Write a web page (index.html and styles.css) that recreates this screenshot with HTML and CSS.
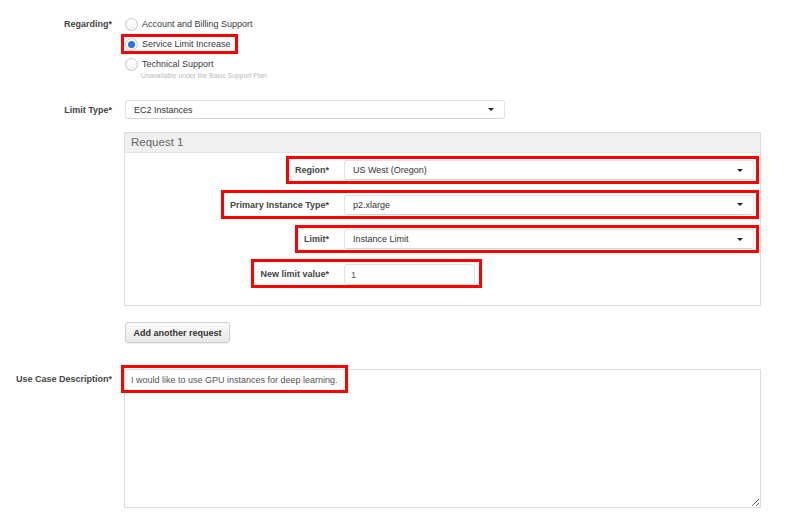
FILE: index.html
```html
<!DOCTYPE html>
<html lang="en">
<head>
  <meta charset="UTF-8" />
  <title>Create Case - Service Limit Increase</title>
  <link rel="stylesheet" href="styles.css">
</head>
<body>
  <form class="case-form">

    <div class="form-row">
      <div class="form-label top">Regarding*</div>
      <div class="radio-group">
        <div class="radio-option">
          <span class="radio"></span>
          <span>Account and Billing Support</span>
        </div>
        <div class="radio-option marked">
          <span class="radio checked"></span>
          <span>Service Limit Increase</span>
        </div>
        <div class="radio-option">
          <span class="radio"></span>
          <span>Technical Support</span>
        </div>
        <div class="radio-note">Unavailable under the Basic Support Plan</div>
      </div>
    </div>

    <div class="form-row limit-type">
      <div class="form-label">Limit Type*</div>
      <div class="select wide-380">
        <span>EC2 Instances</span>
        <span class="caret"></span>
      </div>
    </div>

    <div class="form-row panel-row">
      <div></div>
      <div class="panel">
        <div class="panel-heading">Request 1</div>
        <div class="panel-body">
          <div class="request-row">
            <div class="request-label">Region*</div>
            <div class="request-field">
              <div class="select">
                <span>US West (Oregon)</span>
                <span class="caret"></span>
              </div>
            </div>
          </div>
          <div class="request-row tall">
            <div class="request-label">Primary Instance Type*</div>
            <div class="request-field">
              <div class="select">
                <span>p2.xlarge</span>
                <span class="caret"></span>
              </div>
            </div>
          </div>
          <div class="request-row">
            <div class="request-label">Limit*</div>
            <div class="request-field">
              <div class="select">
                <span>Instance Limit</span>
                <span class="caret"></span>
              </div>
            </div>
          </div>
          <div class="request-row tall">
            <div class="request-label">New limit value*</div>
            <div class="request-field short">
              <input class="text-input" type="text" value="1">
            </div>
          </div>
        </div>
      </div>
    </div>

    <div class="form-row button-row">
      <div></div>
      <div>
        <button type="button" class="btn">Add another request</button>
      </div>
    </div>

    <div class="form-row description-row">
      <div class="form-label top desc">Use Case Description*</div>
      <div class="textarea-wrap">
        <textarea class="textarea">I would like to use GPU instances for deep learning.</textarea>
        <span class="mark-box"></span>
      </div>
    </div>

  </form>
</body>
</html>
```

FILE: styles.css
```css
:root {
  --label: #444;
  --text: #333;
  --line: #ddd;
  --mark: #ff0000;
}

body {
  margin: 0;
  background: #fff;
  font-family: "Liberation Sans", Arial, Helvetica, sans-serif;
  font-size: 9px;
  color: var(--text);
}

.case-form {
  padding-top: 14px;
  display: flex;
  flex-direction: column;
}

.form-row {
  display: grid;
  grid-template-columns: 112px 637px;
  column-gap: 12px;
  align-items: center;
}

.form-label {
  text-align: right;
  font-weight: bold;
  color: var(--label);
  line-height: 10px;
}

.form-label.top {
  align-self: start;
  padding-top: 5px;
}

/* radios */
.radio-group {
  display: flex;
  flex-direction: column;
  margin-left: -3px;
  align-items: flex-start;
}

.radio-option {
  display: flex;
  align-items: center;
  gap: 4px;
  height: 14px;
  padding: 0 4px 0 1px;
  border: 3px solid transparent;
  line-height: 14px;
  color: #3a3a3a;
}

.radio-option.marked {
  border-color: var(--mark);
}

.radio {
  width: 11px;
  height: 11px;
  border-radius: 50%;
  border: 1px solid #c8c8c8;
  background: linear-gradient(to bottom, #fff, #f1f1f1);
  box-sizing: content-box;
  display: flex;
  align-items: center;
  justify-content: center;
}

.radio.checked::after {
  content: '';
  width: 7px;
  height: 7px;
  border-radius: 50%;
  background: #2f73d8;
}

.radio-note {
  margin: -3px 0 0 20px;
  font-size: 6.8px;
  line-height: 9px;
  color: #bbb;
}

/* selects */
.limit-type {
  margin-top: 20px;
}

.select {
  height: 19px;
  border: 1px solid #e2e2e2;
  border-bottom-color: #d6d6d6;
  border-radius: 3px;
  background: #fff;
  box-sizing: border-box;
  display: flex;
  align-items: center;
  justify-content: space-between;
  padding: 0 10px 0 8px;
  color: var(--text);
}

.wide-380 {
  width: 380px;
  margin-left: 1px;
}

.caret {
  width: 0;
  height: 0;
  border-left: 3px solid transparent;
  border-right: 3px solid transparent;
  border-top: 3px solid #222;
}

/* request panel */
.panel-row {
  margin-top: 13px;
}

.panel {
  border: 1px solid var(--line);
}

.panel-heading {
  height: 19px;
  line-height: 19px;
  background: #efefef;
  border-bottom: 1px solid #e4e4e4;
  padding-left: 6px;
  font-size: 11.5px;
  color: #666;
}

.panel-body {
  padding: 3px 1px 17px 0;
  display: flex;
  flex-direction: column;
  gap: 6px;
}

.request-row {
  display: grid;
  grid-template-columns: 219px 1fr;
  height: 28px;
}

.request-row.tall {
  height: 29px;
}

.request-label {
  justify-self: end;
  display: flex;
  align-items: center;
  padding: 0 15px 0 6px;
  border: 3px solid var(--mark);
  border-right: none;
  font-weight: bold;
  color: var(--label);
}

.request-field {
  display: flex;
  align-items: center;
  padding-right: 2px;
  border: 3px solid var(--mark);
  border-left: none;
}

.request-field .select {
  flex: 1;
  height: 20px;
}

.request-field.short {
  justify-self: start;
  padding-right: 4px;
  align-items: flex-end;
}

.text-input {
  width: 131px;
  height: 21px;
  box-sizing: border-box;
  border: 1px solid #e2e2e2;
  border-radius: 3px;
  padding: 0 6px;
  font-family: inherit;
  font-size: 9px;
  color: #555;
  outline: none;
}

/* button */
.button-row {
  margin-top: 16px;
}

.btn {
  height: 21px;
  width: 105px;
  margin-left: 1px;
  padding: 0;
  border: 1px solid #cfcfcf;
  border-radius: 3px;
  background: linear-gradient(to bottom, #fbfbfb, #e8e8e8);
  box-shadow: 0 1px 1px rgba(0, 0, 0, 0.08);
  font-family: inherit;
  font-size: 9px;
  font-weight: bold;
  color: #333;
}

/* description */
.description-row {
  margin-top: 26px;
}

.form-label.desc {
  padding-top: 5px;
}

.textarea-wrap {
  position: relative;
  height: 139px;
}

.textarea {
  display: block;
  width: 100%;
  height: 100%;
  box-sizing: border-box;
  border: 1px solid #dcdcdc;
  padding: 5px 6px;
  font-family: inherit;
  font-size: 9px;
  line-height: 10px;
  color: #555;
  outline: none;
}

.mark-box {
  position: absolute;
  left: -3px;
  top: -4px;
  width: 227px;
  height: 28px;
  box-sizing: border-box;
  border: 3px solid var(--mark);
  pointer-events: none;
}
```
